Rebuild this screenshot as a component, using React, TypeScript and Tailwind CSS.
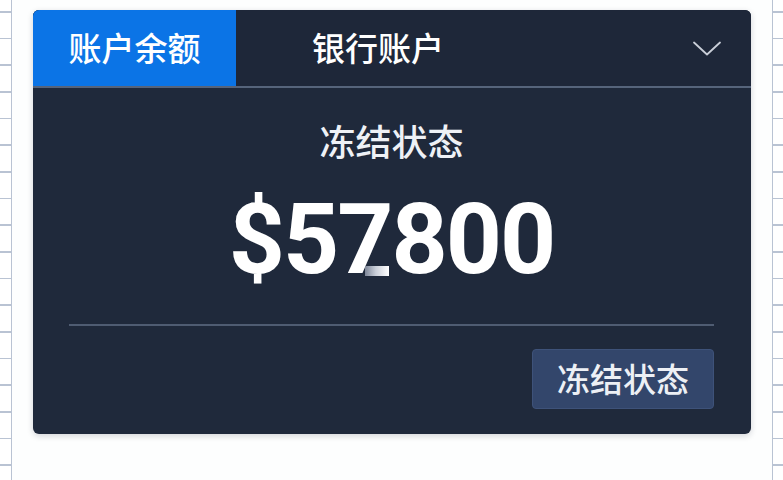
import React from 'react';

const cjk = { fontFamily: '"Noto Sans CJK SC", "Noto Sans", sans-serif' };

export default function App() {
  return (
    <div className="flex h-[480px] w-[783px] overflow-hidden bg-white" style={cjk}>
      {/* left ruled strip */}
      <div className="h-full w-[12px] shrink-0 border-r border-[#b9c3d3] bg-[repeating-linear-gradient(to_bottom,transparent_0,transparent_11px,#b9c3d3_11px,#b9c3d3_12.5px,transparent_12.5px,transparent_26.67px)]" />

      <div className="flex-1 bg-[#fdfefe] px-[21px] pt-[10px]">
        <div className="flex h-[424px] flex-col overflow-hidden rounded-[6px] bg-[#1f293b] shadow-[0_2px_6px_rgba(15,23,42,0.18)]">
          {/* tabs */}
          <div className="flex h-[78px] shrink-0 items-stretch border-b-2 border-[#56647b] bg-[#1e2739]">
            <div className="flex w-[203px] items-center justify-center bg-[#0b74e6] text-[33px] font-medium text-white">
              账户余额
            </div>
            <div className="flex flex-1 items-center pl-[76px] text-[33px] font-medium text-white">
              银行账户
            </div>
            <div className="flex items-center pr-[30px]">
              <svg width="28" height="15" viewBox="0 0 28 15" fill="none">
                <path d="M1 1.5 L14 13.5 L27 1.5" stroke="#c9ced8" strokeWidth="1.8" strokeLinecap="round" strokeLinejoin="round" />
              </svg>
            </div>
          </div>

          {/* body */}
          <div className="flex flex-1 flex-col pl-[36px] pr-[37px] pt-[29px] pb-[24px]">
            <div className="text-center text-[36px] font-medium leading-[46px] text-[#eef1f6]">冻结状态</div>
            <div
              className="mt-[27px] text-center text-[98px] font-bold leading-[100px] tracking-[-2px] text-white"
              style={{ fontFamily: 'Roboto, "Liberation Sans", sans-serif' }}
            >
              $57<span className="relative ml-[-27px] mr-[3px] inline-block w-[24px] text-transparent">.<span className="absolute bottom-[14px] left-0 h-[10px] w-[24px] bg-[linear-gradient(to_right,#7d8698,#c9ced8_45%,#ffffff)]" /></span>800
            </div>
            <div className="mt-[34px] h-[2px] bg-[#4f5c72]" />
            <div className="mt-[23px] flex justify-end">
              <button className="flex h-[60px] w-[182px] items-center justify-center rounded-[4px] border border-[#3e5279] bg-[#33466b] text-[33px] font-medium text-[#edf0f5]">
                冻结状态
              </button>
            </div>
          </div>
        </div>
      </div>

      {/* right ruled strip */}
      <div className="h-full w-[11px] shrink-0 border-l border-[#b9c3d3] bg-[repeating-linear-gradient(to_bottom,transparent_0,transparent_11px,#b9c3d3_11px,#b9c3d3_12.5px,transparent_12.5px,transparent_26.67px)]" />
    </div>
  );
}
